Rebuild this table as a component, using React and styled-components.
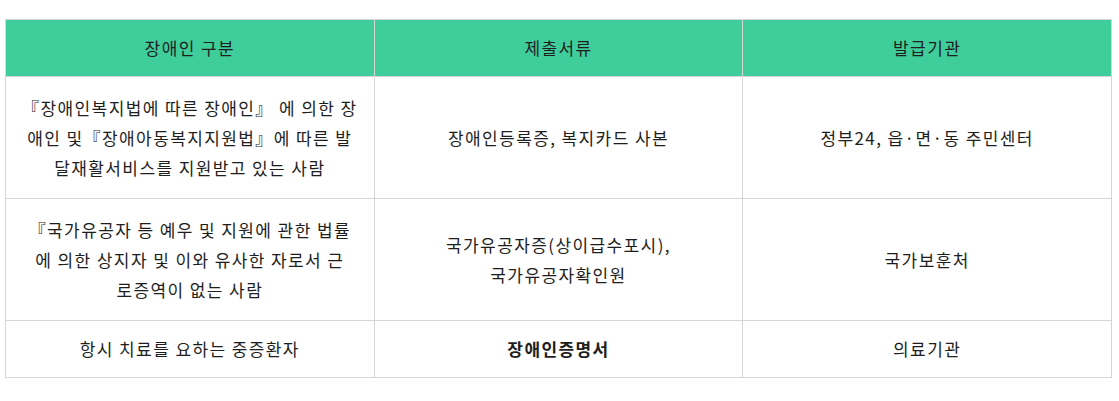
import React from "react";
import styled, { createGlobalStyle } from "styled-components";

const GlobalStyle = createGlobalStyle`
  body {
    margin: 0;
    background: #fff;
    font-family: "Noto Sans CJK KR", "Noto Sans", sans-serif;
    color: #1e1e1e;
  }
`;

const Wrap = styled.div`
  padding: 19px 8px 0 5px;
`;

const Table = styled.table`
  width: 1107px;
  border-collapse: collapse;
  table-layout: fixed;
  font-size: 17px;
  letter-spacing: 1.4px;
  line-height: 30px;
`;

const HeadCell = styled.th`
  height: 56px;
  padding: 0 16px;
  background-color: #3fcd9c;
  border: 1px solid #d6d6d6;
  font-weight: 400;
  color: #1f1f1f;
  text-align: center;
`;

const Row = styled.tr`
  height: ${(props) => props.h || "56px"};
`;

const Cell = styled.td`
  padding: 12px ${(props) => props.padX || "14px"};
  border: 1px solid #d6d6d6;
  text-align: center;
  vertical-align: middle;
  word-break: ${(props) => (props.wrapAll ? "break-all" : "keep-all")};
  font-weight: ${(props) => (props.bold ? 700 : 400)};
`;

const rows = [
  {
    h: "122px",
    group: "『장애인복지법에 따른 장애인』 에 의한 장애인 및『장애아동복지지원법』에 따른 발달재활서비스를 지원받고 있는 사람",
    docs: ["장애인등록증, 복지카드 사본"],
    org: "정부24, 읍·면·동 주민센터"
  },
  {
    h: "122px",
    padX: "22px",
    group: "『국가유공자 등 예우 및 지원에 관한 법률에 의한 상지자 및 이와 유사한 자로서 근로증역이 없는 사람",
    docs: ["국가유공자증(상이급수포시),", "국가유공자확인원"],
    org: "국가보훈처"
  },
  {
    h: "57px",
    group: "항시 치료를 요하는 중증환자",
    docs: ["장애인증명서"],
    org: "의료기관",
    bold: true
  }
];

function App() {
  return (
    <React.Fragment>
      <GlobalStyle />
      <Wrap>
        <Table>
          <thead>
            <tr>
              <HeadCell>장애인 구분</HeadCell>
              <HeadCell>제출서류</HeadCell>
              <HeadCell>발급기관</HeadCell>
            </tr>
          </thead>
          <tbody>
            {rows.map((r, i) => (
              <Row key={i} h={r.h}>
                <Cell wrapAll padX={r.padX}>{r.group}</Cell>
                <Cell bold={r.bold}>
                  {r.docs.map((d, j) => (
                    <React.Fragment key={j}>
                      {j > 0 && <br />}
                      {d}
                    </React.Fragment>
                  ))}
                </Cell>
                <Cell>{r.org}</Cell>
              </Row>
            ))}
          </tbody>
        </Table>
      </Wrap>
    </React.Fragment>
  );
}

export default App;
